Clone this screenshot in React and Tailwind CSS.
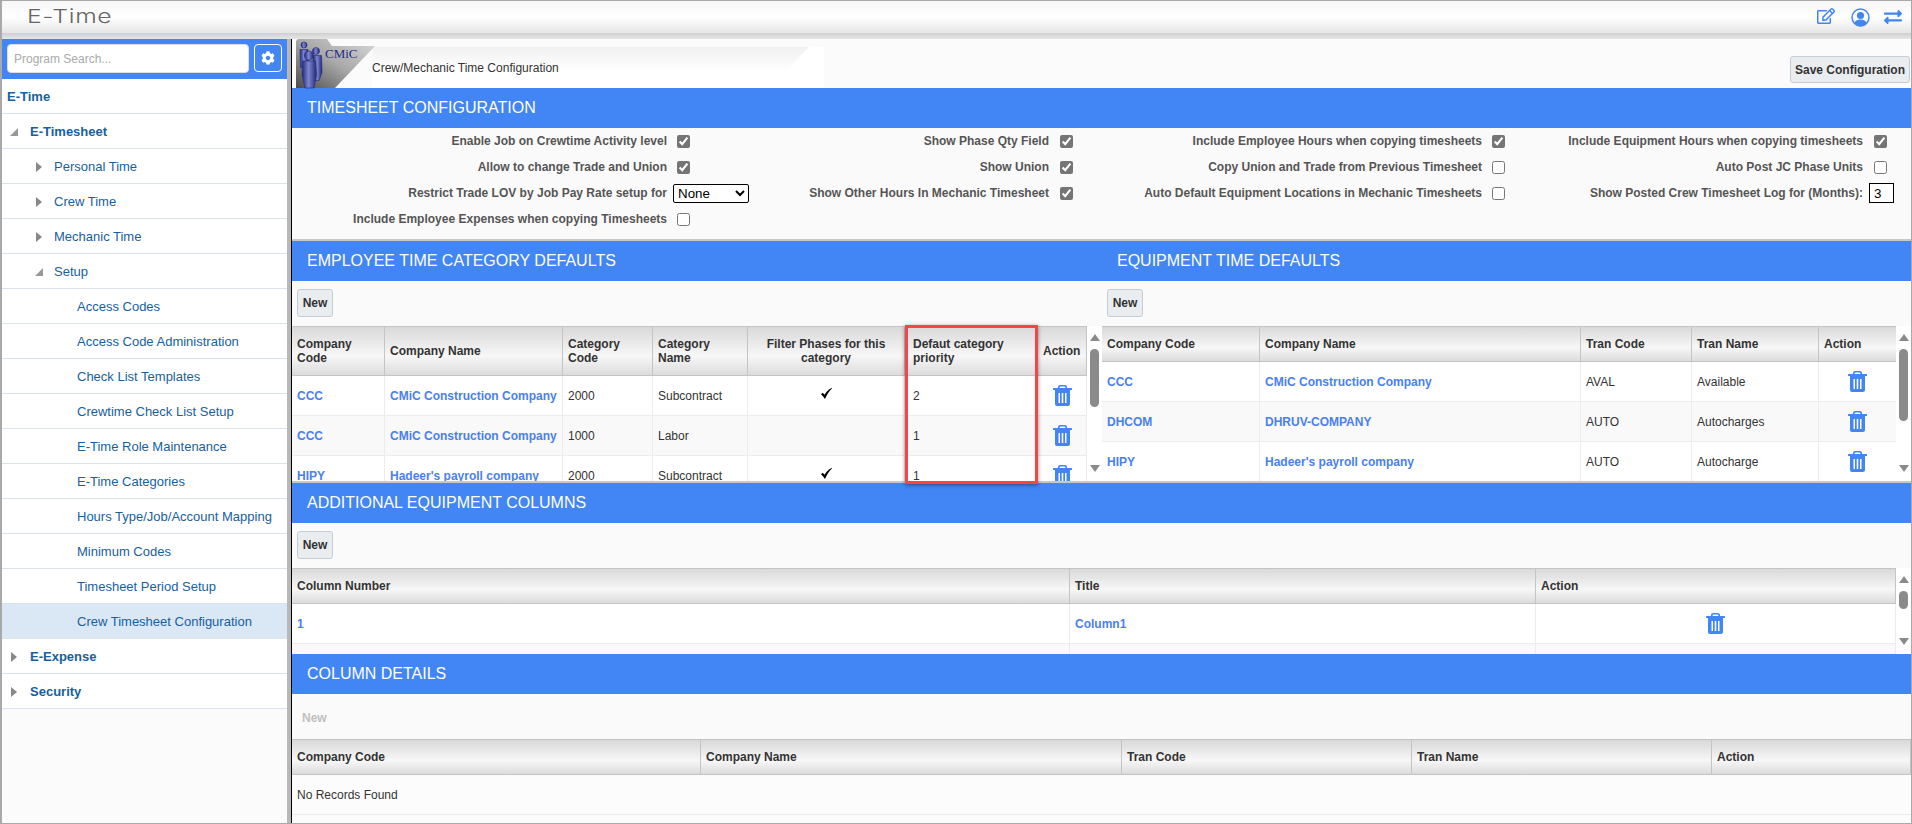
/**
 * App – E-Time crew/mechanic timesheet configuration screen.
 */
import { FaCog, FaExchangeAlt, FaRegEdit } from 'react-icons/fa'

const navRows = [
  { label: 'E-Time', level: 0, bold: true },
  { label: 'E-Timesheet', level: 1, bold: true, arrow: 'open' },
  { label: 'Personal Time', level: 2, arrow: 'closed' },
  { label: 'Crew Time', level: 2, arrow: 'closed' },
  { label: 'Mechanic Time', level: 2, arrow: 'closed' },
  { label: 'Setup', level: 2, arrow: 'open' },
  { label: 'Access Codes', level: 3 },
  { label: 'Access Code Administration', level: 3 },
  { label: 'Check List Templates', level: 3 },
  { label: 'Crewtime Check List Setup', level: 3 },
  { label: 'E-Time Role Maintenance', level: 3 },
  { label: 'E-Time Categories', level: 3 },
  { label: 'Hours Type/Job/Account Mapping', level: 3 },
  { label: 'Minimum Codes', level: 3 },
  { label: 'Timesheet Period Setup', level: 3 },
  { label: 'Crew Timesheet Configuration', level: 3, selected: true },
  { label: 'E-Expense', level: 1, bold: true, arrow: 'closed' },
  { label: 'Security', level: 1, bold: true, arrow: 'closed' },
]

const indent = { 0: 'pl-[5px]', 1: 'pl-[8px]', 2: 'pl-[33px]', 3: 'pl-[75px]' }

function NavArrow({ type }) {
  if (type === 'open') {
    return (
      <svg width="8" height="8" viewBox="0 0 8 8" className="w-[8px] shrink-0 fill-[#999]">
        <polygon points="8,0 8,8 0,8" />
      </svg>
    )
  }
  return (
    <svg width="6" height="10" viewBox="0 0 6 10" className="w-[6px] ml-[1px] mr-[1px] shrink-0 fill-[#888]">
      <polygon points="0,0 6,5 0,10" />
    </svg>
  )
}

function Sidebar() {
  return (
    <aside className="w-[285px] shrink-0 flex flex-col bg-[#fbfbfb]">
      <div className="h-[40px] bg-[#4285f4] flex items-start pt-[5px] pl-[5px] gap-[5px]">
        <input
          placeholder="Program Search..."
          className="w-[242px] h-[29px] rounded-[4px] bg-white border border-[#ddd] px-[6px] text-xs placeholder:text-[#aaa]"
        />
        <button className="w-[28px] h-[28px] rounded-[4px] border border-white flex items-center justify-center text-white">
          <FaCog size={14} />
        </button>
      </div>
      {navRows.map((row) => (
        <div
          key={row.label}
          className={`h-[35px] pt-[1px] flex items-center border-b border-[#dce3ea] text-[13px] text-[#17609f] ${indent[row.level]} ${row.selected ? 'bg-[#dae7f4]' : 'bg-white'} ${row.bold ? 'font-bold' : ''}`}
        >
          {row.arrow && <NavArrow type={row.arrow} />}
          <span className={row.level === 1 ? 'ml-[12px]' : row.level === 2 ? 'ml-[11px]' : ''}>{row.label}</span>
        </div>
      ))}
    </aside>
  )
}

function SectionHead({ children }) {
  return (
    <div className="h-[40px] shrink-0 bg-[#4285f4] pl-[15px] flex items-center text-base text-white">
      {children}
    </div>
  )
}

function Check({ on }) {
  return <input type="checkbox" checked={on} readOnly className="block accent-[#757575]" />
}

function FormRow({ label, control, padClass }) {
  return (
    <>
      <div className="text-right text-xs font-bold text-[#555]">{label}</div>
      <div className={padClass}>{control}</div>
    </>
  )
}

function TimesheetForm() {
  return (
    <div className="h-[113px] shrink-0 bg-[#fafafa] border-b-2 border-[#c8c8c8]">
      <div className="grid grid-cols-[375px_100px_282px_41px_392px_48px_333px_1fr] auto-rows-[26px] items-center">
        <FormRow label="Enable Job on Crewtime Activity level" padClass="pl-[10px]" control={<Check on />} />
        <FormRow label="Show Phase Qty Field" padClass="pl-[11px]" control={<Check on />} />
        <FormRow label="Include Employee Hours when copying timesheets" padClass="pl-[10px]" control={<Check on />} />
        <FormRow label="Include Equipment Hours when copying timesheets" padClass="pl-[11px]" control={<Check on />} />

        <FormRow label="Allow to change Trade and Union" padClass="pl-[10px]" control={<Check on />} />
        <FormRow label="Show Union" padClass="pl-[11px]" control={<Check on />} />
        <FormRow label="Copy Union and Trade from Previous Timesheet" padClass="pl-[10px]" control={<Check />} />
        <FormRow label="Auto Post JC Phase Units" padClass="pl-[11px]" control={<Check />} />

        <FormRow
          label="Restrict Trade LOV by Job Pay Rate setup for"
          padClass="pl-[6px]"
          control={
            <select className="block w-[76px] h-[19px] bg-white border border-black rounded-[2px] text-[13.33px] text-black">
              <option>None</option>
            </select>
          }
        />
        <FormRow label="Show Other Hours In Mechanic Timesheet" padClass="pl-[11px]" control={<Check on />} />
        <FormRow label="Auto Default Equipment Locations in Mechanic Timesheets" padClass="pl-[10px]" control={<Check />} />
        <FormRow
          label="Show Posted Crew Timesheet Log for (Months):"
          padClass="pl-[6px]"
          control={
            <input
              value="3"
              readOnly
              className="block w-[25px] h-[20px] bg-white border border-black pl-[4px] text-[13.33px] text-black"
            />
          }
        />

        <FormRow label="Include Employee Expenses when copying Timesheets" padClass="pl-[10px]" control={<Check />} />
      </div>
    </div>
  )
}

function NewButton() {
  return (
    <div className="h-[45px] shrink-0 pl-[5px] pt-[8px] bg-[#fafafa]">
      <button className="w-[36px] h-[28px] rounded-[3px] bg-[#e9edf0] border border-[#c5cdd4] text-xs font-bold text-[#333]">
        New
      </button>
    </div>
  )
}

function TrashIcon() {
  return (
    <svg width="19" height="21" viewBox="0 0 19 21" className="mx-auto block fill-[#4285f4]">
      <path d="M5 4V2.2C5 .9 5.9 0 7.2 0h4.6C13.1 0 14 .9 14 2.2V4h-1.6V2.4c0-.5-.3-.8-.8-.8H7.4c-.5 0-.8.3-.8.8V4z" />
      <rect x="0" y="3" width="19" height="2" rx="0.5" />
      <path fillRule="evenodd" d="M2 5h15v14c0 1.2-.8 2-2 2H4c-1.2 0-2-.8-2-2zM5.500 8v10H7V8zM8.700 8v10h1.600V8zM12 8v10h1.500V8z" />
    </svg>
  )
}

function CheckMark() {
  return (
    <svg width="11" height="11" viewBox="0 0 11 11" className="mx-auto block -mt-1 fill-black">
      <path d="M0 6.200l1.600-1.500 2 2.100C5 4.200 7.400 1.600 10.600 0l.4.500C8.200 3 6 6.600 4 11 2.900 9.100 1.500 7.500 0 6.200z" />
    </svg>
  )
}

function UserCircleIcon() {
  return (
    <svg width="19" height="19" viewBox="0 0 19 19" className="ml-[16px] fill-[#4285f4]">
      <circle cx="9.500" cy="9.500" r="8.500" fill="none" stroke="#4285f4" strokeWidth="1.500" />
      <circle cx="9.500" cy="7.500" r="3.600" />
      <path d="M3.200 15.400C3.800 12.600 6.400 11.400 9.500 11.400s5.700 1.200 6.300 4A8.500 8.500 0 0 1 3.200 15.400z" />
    </svg>
  )
}

function Scrollbar({ thumbClass }) {
  return (
    <div className="w-[15px] shrink-0 bg-white flex flex-col items-center justify-between pt-[8px] pb-[9px]">
      <div className="flex flex-col items-center">
        <svg width="10" height="7" viewBox="0 0 10 7" className="fill-[#8a8a8a]">
          <polygon points="5,0 10,7 0,7" />
        </svg>
        <div className={`mt-[8px] w-[9px] rounded-[5px] bg-[#8a8a8a] ${thumbClass}`} />
      </div>
      <svg width="10" height="7" viewBox="0 0 10 7" className="fill-[#8a8a8a]">
        <polygon points="0,0 10,0 5,7" />
      </svg>
    </div>
  )
}

const thBase =
  'px-[5px] text-left align-middle text-xs leading-[14px] font-bold text-[#333] border-t border-b border-r border-[#c4c4c4] bg-gradient-to-b from-[#d9d9d9] via-[#f7f7f7] via-60% to-[#dcdcdc]'
const tdBase = 'px-[5px] text-xs text-[#333] border-b border-r border-[#ececec]'
const linkCell = 'font-bold text-[#4a7ff0]'

function Link({ children }) {
  return <span className={linkCell}>{children}</span>
}

function EmployeeTable() {
  const rows = [
    ['CCC', 'CMiC Construction Company', '2000', 'Subcontract', true, '2'],
    ['CCC', 'CMiC Construction Company', '1000', 'Labor', false, '1'],
    ['HIPY', "Hadeer's payroll company", '2000', 'Subcontract', true, '1'],
  ]
  return (
    <div className="flex h-[155px]">
      <div className="w-[795px] overflow-hidden">
        <table className="w-full table-fixed border-separate border-spacing-0">
          <thead>
            <tr className="h-[50px]">
              <th className={`${thBase} w-[93px]`}>Company Code</th>
              <th className={`${thBase} w-[178px]`}>Company Name</th>
              <th className={`${thBase} w-[90px]`}>Category Code</th>
              <th className={`${thBase} w-[95px]`}>Category Name</th>
              <th className={`${thBase} w-[157px] !text-center`}>Filter Phases for this category</th>
              <th className={`${thBase} w-[133px] !pl-[8px]`}>Defaut category priority</th>
              <th className={`${thBase} w-[49px]`}>Action</th>
            </tr>
          </thead>
          <tbody>
            {rows.map((r, i) => (
              <tr key={i} className={`h-[40px] ${i % 2 ? 'bg-[#f9f9f9]' : 'bg-white'}`}>
                <td className={tdBase}><Link>{r[0]}</Link></td>
                <td className={`${tdBase} whitespace-nowrap`}><Link>{r[1]}</Link></td>
                <td className={tdBase}>{r[2]}</td>
                <td className={tdBase}>{r[3]}</td>
                <td className={tdBase}>{r[4] && <CheckMark />}</td>
                <td className={`${tdBase} !pl-[8px]`}>{r[5]}</td>
                <td className={tdBase}><TrashIcon /></td>
              </tr>
            ))}
          </tbody>
        </table>
      </div>
      <Scrollbar thumbClass="h-[58px]" />
    </div>
  )
}

function EquipmentTable() {
  const rows = [
    ['CCC', 'CMiC Construction Company', 'AVAL', 'Available'],
    ['DHCOM', 'DHRUV-COMPANY', 'AUTO', 'Autocharges'],
    ['HIPY', "Hadeer's payroll company", 'AUTO', 'Autocharge'],
  ]
  return (
    <div className="flex h-[155px]">
      <div className="w-[795px] overflow-hidden">
        <table className="w-full table-fixed border-separate border-spacing-0">
          <thead>
            <tr className="h-[36px]">
              <th className={`${thBase} w-[158px]`}>Company Code</th>
              <th className={`${thBase} w-[321px]`}>Company Name</th>
              <th className={`${thBase} w-[111px]`}>Tran Code</th>
              <th className={`${thBase} w-[127px]`}>Tran Name</th>
              <th className={`${thBase} w-[78px]`}>Action</th>
            </tr>
          </thead>
          <tbody>
            {rows.map((r, i) => (
              <tr key={i} className={`h-[40px] ${i % 2 ? 'bg-[#f9f9f9]' : 'bg-white'}`}>
                <td className={tdBase}><Link>{r[0]}</Link></td>
                <td className={tdBase}><Link>{r[1]}</Link></td>
                <td className={tdBase}>{r[2]}</td>
                <td className={tdBase}>{r[3]}</td>
                <td className={tdBase}><TrashIcon /></td>
              </tr>
            ))}
          </tbody>
        </table>
      </div>
      <Scrollbar thumbClass="h-[72px]" />
    </div>
  )
}

function ColumnsTable() {
  return (
    <div className="flex h-[86px]">
      <div className="w-[1604px] overflow-hidden">
        <table className="w-full table-fixed border-separate border-spacing-0">
          <thead>
            <tr className="h-[36px]">
              <th className={`${thBase} w-[778px]`}>Column Number</th>
              <th className={`${thBase} w-[466px]`}>Title</th>
              <th className={`${thBase} w-[360px]`}>Action</th>
            </tr>
          </thead>
          <tbody>
            <tr className="h-[40px] bg-white">
              <td className={tdBase}><Link>1</Link></td>
              <td className={tdBase}><Link>Column1</Link></td>
              <td className={tdBase}><TrashIcon /></td>
            </tr>
            <tr className="h-[40px] bg-[#f9f9f9]">
              <td className={tdBase} />
              <td className={tdBase} />
              <td className={tdBase} />
            </tr>
          </tbody>
        </table>
      </div>
      <Scrollbar thumbClass="h-[18px]" />
    </div>
  )
}

function DetailsTable() {
  return (
    <table className="w-full table-fixed border-separate border-spacing-0">
      <thead>
        <tr className="h-[36px]">
          <th className={`${thBase} w-[409px]`}>Company Code</th>
          <th className={`${thBase} w-[421px]`}>Company Name</th>
          <th className={`${thBase} w-[290px]`}>Tran Code</th>
          <th className={`${thBase} w-[300px]`}>Tran Name</th>
          <th className={thBase}>Action</th>
        </tr>
      </thead>
      <tbody>
        <tr className="h-[40px] bg-[#fcfcfc]">
          <td colSpan={5} className="px-[5px] text-xs text-[#333] border-b border-[#ececec]">
            No Records Found
          </td>
        </tr>
      </tbody>
    </table>
  )
}

function CmicLogo() {
  return (
    <svg width="77" height="49" viewBox="0 0 77 49" className="relative z-10 ml-[3px] shrink-0 overflow-visible">
      <defs>
        <linearGradient id="tab" x1="0" y1="1" x2="1" y2="0">
          <stop offset="0" stopColor="#4c4c4c" />
          <stop offset="0.5" stopColor="#a8a8a8" />
          <stop offset="1" stopColor="#d8d8d8" />
        </linearGradient>
        <linearGradient id="man" x1="0" y1="0" x2="1" y2="0">
          <stop offset="0" stopColor="#1f2a7c" />
          <stop offset="0.45" stopColor="#7f86cf" />
          <stop offset="1" stopColor="#20297a" />
        </linearGradient>
      </defs>
      <path d="M1 49V3q0-3 3-3h28l5 7h43L40 49z" fill="url(#tab)" />
      <g fill="url(#man)" stroke="#20297a" strokeWidth="0.6">
        <circle cx="9" cy="6" r="3" />
        <path d="M5 10.500h8l.5 18H5.500z" />
        <circle cx="21" cy="12" r="3.500" />
        <path d="M18 16.500h8.500l.5 17-3 8h-6z" />
        <circle cx="14" cy="16.500" r="4.500" />
        <path d="M7.500 22h13l1 14-2.500 13H10L7 36z" />
      </g>
      <text x="30" y="19" fontFamily="Liberation Serif, serif" fontSize="13" fill="#1f2c86">
        CMiC
      </text>
    </svg>
  )
}

export default function App() {
  return (
    <div className="w-screen h-screen overflow-hidden flex flex-col bg-[#fbfbfb] border-l-2 border-t border-r border-b border-[#a9a9a9] font-['Liberation_Sans',Arial,sans-serif]">
      {/* Top bar */}
      <header className="h-[32px] shrink-0 flex items-center pl-[25px] pr-[9px] bg-gradient-to-b from-[#f7f7f7] via-white via-50% to-[#e6e6e6]">
        <span className="inline-block origin-left scale-x-[1.3] text-[19px] font-light tracking-[0.5px] text-[#666] font-['Inter',sans-serif]">
          E-Time
        </span>
        <div className="ml-auto flex items-center text-[#4285f4]">
          <FaRegEdit size={18} className="-mt-[3px]" />
          <UserCircleIcon />
          <FaExchangeAlt size={18} className="ml-[14px]" />
        </div>
      </header>
      <div className="h-[6px] shrink-0 bg-gradient-to-b from-[#cfcfcf] to-[#e6e6e6]" />

      <div className="flex-1 flex min-h-0">
        <Sidebar />
        <div className="w-[5px] shrink-0 bg-[#b8b8b8] border-r border-black" />

        <main className="flex-1 min-w-0 flex flex-col">
          {/* Title strip */}
          <div className="h-[49px] shrink-0 flex">
            <CmicLogo />
            <div className="w-[452px] self-end h-[41px] bg-white">
              <div className="w-[437px] h-full pt-[13px] text-xs text-[#333] bg-gradient-to-b from-[#f1f1f1] to-white to-60% [clip-path:polygon(0_0,100%_0,415px_23px,415px_100%,0_100%)]">
                Crew/Mechanic Time Configuration
              </div>
            </div>
            <button className="ml-auto mr-[1px] mt-[17px] w-[120px] h-[27px] rounded-[3px] bg-[#e9edf0] border border-[#c5cdd4] text-xs font-bold text-[#333]">
              Save Configuration
            </button>
          </div>

          <SectionHead>TIMESHEET CONFIGURATION</SectionHead>
          <TimesheetForm />

          {/* Employee + equipment defaults */}
          <div className="relative h-[242px] shrink-0 flex border-b-2 border-[#c8c8c8]">
            <div className="w-[810px] shrink-0 flex flex-col">
              <SectionHead>EMPLOYEE TIME CATEGORY DEFAULTS</SectionHead>
              <NewButton />
              <EmployeeTable />
            </div>
            <div className="flex-1 min-w-0 flex flex-col">
              <SectionHead>EQUIPMENT TIME DEFAULTS</SectionHead>
              <NewButton />
              <EquipmentTable />
            </div>
            <div className="absolute z-10 left-[613px] top-[84px] w-[133px] h-[159px] border-[3px] border-[#f44646] shadow-[0_1px_4px_rgba(0,0,0,0.45)] pointer-events-none" />
          </div>

          <SectionHead>ADDITIONAL EQUIPMENT COLUMNS</SectionHead>
          <NewButton />
          <ColumnsTable />

          <SectionHead>COLUMN DETAILS</SectionHead>
          <div className="h-[45px] shrink-0 pl-[10px] pt-[16px] text-xs font-bold text-[#c0c0c0] bg-[#fafafa]">New</div>
          <DetailsTable />
        </main>
      </div>
    </div>
  )
}
